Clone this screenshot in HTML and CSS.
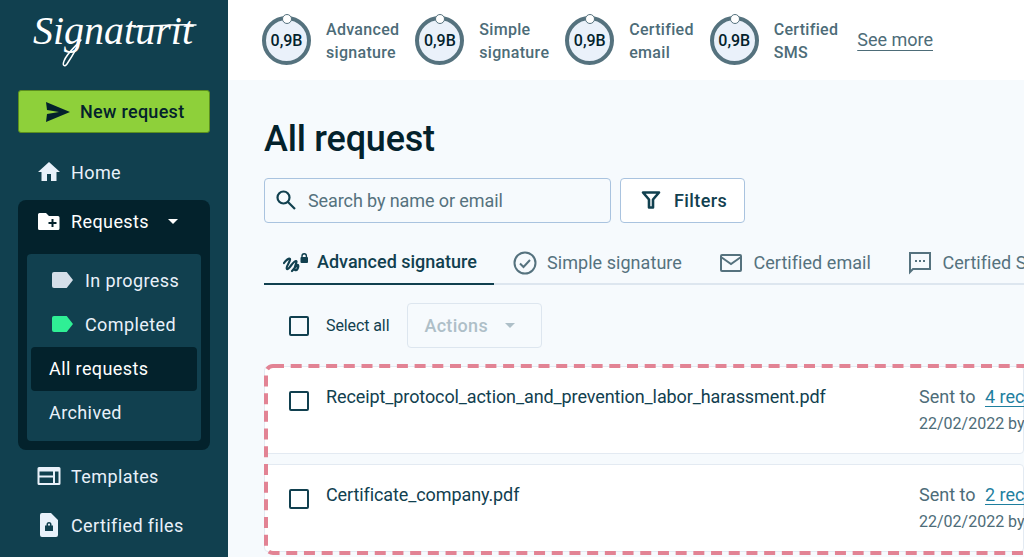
FILE: index.html
```html
<!doctype html>
<html lang="en">
<head>
<meta charset="utf-8">
<title>All request</title>
<link rel="stylesheet" href="styles.css">
</head>

<body>
<div class="app">
  <aside class="side">
    <div class="logo">
      <span class="logo-text">Signaturit</span>
      <svg class="logo-swash" width="192" height="70" viewBox="0 0 192 70" fill="none" stroke="#fff" stroke-width="1.500" stroke-linecap="round"><path d="M116 27c22-1 44-3 62-2"/><path d="M62 40c-3 9-9 18-13 24-2 3-5 2-3-3 3-8 11-14 17-21"/></svg>
    </div>
    <button class="new-btn">
      <svg width="24" height="20" viewBox="0 0 24 20"><path fill="#03222c" d="M0 0l24 10L0 20l1-8 12-2-12-2z"/></svg>
      New request
    </button>
    <a class="nav nav-home">
      <svg class="nav-ico" width="24" height="24" viewBox="0 0 24 24"><path d="M10 21v-7h4v7h5.500v-9H23L12 2 1 12h3.500v9z"/></svg>
      Home
    </a>
    <div class="group">
      <a class="nav nav-open">
        <svg class="nav-ico" width="24" height="24" viewBox="0 0 24 24"><path d="M2.500 3h6.500l3 3h9a1.500 1.500 0 0 1 1.500 1.500v11a1.500 1.500 0 0 1-1.500 1.500h-18.500a1.500 1.500 0 0 1-1.500-1.500v-14a1.500 1.500 0 0 1 1.500-1.500z"/><path fill="#03222c" d="M14.500 9h2v3h3v2h-3v3h-2v-3h-3v-2h3z"/></svg>
        Requests
        <span class="caret"></span>
      </a>
      <div class="sub">
        <a class="sub-item sub-tag"><span class="tag tag-grey"></span>In progress</a>
        <a class="sub-item sub-tag"><span class="tag tag-green"></span>Completed</a>
        <a class="sub-item active">All requests</a>
        <a class="sub-item">Archived</a>
      </div>
    </div>
    <a class="nav nav-tpl">
      <svg class="nav-ico" width="24" height="24" viewBox="0 0 24 24"><path fill-rule="evenodd" d="M2 3h20a1.500 1.500 0 0 1 1.500 1.500v15a1.500 1.500 0 0 1-1.500 1.500h-20a1.500 1.500 0 0 1-1.500-1.500v-15a1.500 1.500 0 0 1 1.500-1.500zM2.500 7.500v4h13.500v-4zM2.500 13.500v5.500h13.500v-5.500zM18 7.500v11.500h3.500v-11.500z"/></svg>
      Templates
    </a>
    <a class="nav nav-files">
      <svg class="nav-ico" width="24" height="24" viewBox="0 0 24 24"><path fill-rule="evenodd" d="M5 0h9l7 7v15a2 2 0 0 1-2 2h-14a2 2 0 0 1-2-2v-20a2 2 0 0 1 2-2zM9.500 11.500v1h-1.500v5.500h8v-5.500h-1.500v-1a2.500 2.500 0 0 0-5 0zM11 11.500a1 1 0 0 1 2 0v1h-2z"/></svg>
      Certified files
    </a>
  </aside>

  <div class="main">
    <header class="top">
      <div class="stat">
        <div class="gauge">0,9B</div>
        <div class="stat-label">Advanced<br>signature</div>
      </div>
      <div class="stat">
        <div class="gauge">0,9B</div>
        <div class="stat-label">Simple<br>signature</div>
      </div>
      <div class="stat">
        <div class="gauge">0,9B</div>
        <div class="stat-label">Certified<br>email</div>
      </div>
      <div class="stat">
        <div class="gauge">0,9B</div>
        <div class="stat-label">Certified<br>SMS</div>
      </div>
      <a class="see-more">See more</a>
    </header>

    <section class="content">
      <h1>All request</h1>
      <div class="tools">
        <div class="search">
          <svg width="22" height="22" viewBox="0 0 22 22" fill="none" stroke="#11404f" stroke-width="2.200"><circle cx="8.500" cy="8.500" r="6"/><path d="M13 13l7 7"/></svg>
          <span>Search by name or email</span>
        </div>
        <button class="filters">
          <svg width="20" height="20" viewBox="0 0 20 20" fill="none" stroke="#11404f" stroke-width="2.600" stroke-linejoin="round"><path d="M2 2.500h16l-6 7v8h-4v-8z"/></svg>
          Filters
        </button>
      </div>

      <nav class="tabs">
        <a class="tab tab-on">
          <svg width="26" height="24" viewBox="0 0 26 24" fill="none" stroke="#11404f" stroke-width="2.200" stroke-linecap="round"><path d="M1 13c2-3 5-5 6-4 1 2-5 8-3 10 2 1 6-8 9-8 2 0-3 8-1 9 2 1 4-3 3-5-1-1-3 3-6 6"/><path d="M19 8v-2a2.200 2.200 0 0 1 4.400 0v2" stroke-width="1.400"/><rect x="17.500" y="7" width="7.500" height="6" fill="#11404f" stroke="none" rx="1"/></svg>
          Advanced signature
        </a>
        <a class="tab">
          <svg width="24" height="24" viewBox="0 0 24 24" fill="none" stroke="#55727e" stroke-width="2"><circle cx="12" cy="12" r="10.500"/><path d="M7 12.500l3.500 3.500 6.500-7"/></svg>
          Simple signature
        </a>
        <a class="tab">
          <svg width="24" height="24" viewBox="0 0 24 24" fill="none" stroke="#55727e" stroke-width="2"><rect x="2" y="4" width="20" height="16" rx="1"/><path d="M2 6l10 7 10-7"/></svg>
          Certified email
        </a>
        <a class="tab">
          <svg width="24" height="24" viewBox="0 0 24 24" fill="none" stroke="#55727e" stroke-width="2"><path d="M2 2h20v16h-17l-3 3z"/><path d="M7 10h2M11 10h2M15 10h2"/></svg>
          Certified SMS
        </a>
      </nav>

      <div class="bulk">
        <span class="check"></span>
        <span class="bulk-label">Select all</span>
        <button class="actions">Actions<span class="caret caret-muted"></span></button>
      </div>

      <div class="list">
        <svg class="dash" width="800" height="191"><rect x="2" y="2" width="796" height="187" rx="7" fill="none" stroke="#e28394" stroke-width="4" stroke-dasharray="11 6.700"/></svg>
        <div class="card">
          <span class="check"></span>
          <div class="card-name">Receipt_protocol_action_and_prevention_labor_harassment.pdf</div>
          <div class="card-meta">
            <div class="sent">Sent to <a>4 recipients</a></div>
            <div class="date">22/02/2022 by John</div>
          </div>
        </div>
        <div class="card">
          <span class="check"></span>
          <div class="card-name">Certificate_company.pdf</div>
          <div class="card-meta">
            <div class="sent">Sent to <a>2 recipients</a></div>
            <div class="date">22/02/2022 by John</div>
          </div>
        </div>
      </div>
    </section>
  </div>
</div>
</body>
</html>
```

FILE: styles.css
```css
* {
  box-sizing: border-box;
}

html,
body {
  margin: 0;
  height: 557px;
  overflow: hidden;
}

body {
  font-family: Roboto, "Liberation Sans", sans-serif;
  color: #11404f;
}

button {
  font-family: inherit;
}

.app {
  display: flex;
  width: 1024px;
  height: 557px;
  overflow: hidden;
}

/* sidebar */
.side {
  flex: 0 0 228px;
  padding-left: 18px;
  padding-right: 18px;
  background: #11404f;
  color: #e9f1fa;
}

.logo {
  position: relative;
  height: 90px;
  padding: 0 0 0 15px;
}

.logo-text {
  display: block;
  padding-top: 8px;
  font-family: "Liberation Serif", serif;
  font-style: italic;
  font-size: 40px;
  line-height: 46px;
  color: #fff;
}

.logo-swash {
  position: absolute;
  top: 0;
  left: 0;
}

.new-btn {
  display: flex;
  align-items: center;
  gap: 10px;
  width: 192px;
  height: 43px;
  padding: 0 0 0 27px;
  border: 1px solid #5c8f1e;
  border-radius: 3px;
  background: #8ed03a;
  color: #03222c;
  font-size: 18px;
  font-weight: 500;
  letter-spacing: 0.3px;
}

.nav {
  display: flex;
  align-items: center;
  gap: 10px;
  height: 28px;
  padding-left: 19px;
  font-size: 18px;
  letter-spacing: 0.4px;
}

.nav-ico {
  fill: #e9f1fa;
  flex: none;
}

.nav-home {
  margin-top: 25px;
}

.group {
  margin-top: 14px;
  padding: 0 9px 9px;
  height: 250px;
  border-radius: 8px;
  background: #03222c;
}

.nav-open {
  height: 43px;
  padding-left: 10px;
  color: #fff;
  margin-bottom: 11px;
}

.nav-open .nav-ico {
  fill: #fff;
}

.caret {
  display: inline-block;
  margin-left: 9px;
  border-left: 5px solid transparent;
  border-right: 5px solid transparent;
  border-top: 5px solid #fff;
}

.sub {
  height: 187px;
  padding: 5px 4px 4px;
  border-radius: 4px;
  background: #11404f;
}

.sub-item {
  display: flex;
  align-items: center;
  height: 44px;
  padding-left: 18px;
  padding-bottom: 2px;
  font-size: 18px;
  letter-spacing: 0.4px;
}

.sub-tag {
  padding-left: 21px;
  gap: 12px;
}

.tag {
  width: 21px;
  height: 16px;
  clip-path: polygon(0 0, 70% 0, 100% 50%, 70% 100%, 0 100%);
  border-radius: 2px;
}

.tag-grey {
  background: #d5dee8;
}

.tag-green {
  background: #2fef95;
}

.active {
  border-radius: 4px;
  background: #03222c;
  color: #fff;
}

.nav-tpl {
  margin-top: 12px;
}

.nav-files {
  margin-top: 21px;
}

/* main column */
.main {
  flex: 1;
  min-width: 0;
  background: #f6fafd;
}

.top {
  display: flex;
  align-items: center;
  gap: 16px;
  height: 80px;
  padding-left: 34px;
  background: #fff;
}

.stat {
  display: flex;
  align-items: center;
  gap: 15px;
}

.gauge {
  position: relative;
  display: flex;
  align-items: center;
  justify-content: center;
  width: 49px;
  height: 49px;
  border: 4px solid #55727e;
  border-radius: 50%;
  background: #eaf1fa;
  color: #03222c;
  font-size: 16px;
  font-weight: 500;
}

.gauge::after {
  content: "";
  position: absolute;
  top: -6px;
  left: 16px;
  width: 8px;
  height: 8px;
  border: 1.500px solid #55727e;
  border-radius: 50%;
  background: #fff;
}

.stat-label {
  padding-top: 1px;
  font-size: 16px;
  font-weight: 500;
  line-height: 23px;
  letter-spacing: 0.3px;
  color: #4d6c78;
}

.see-more {
  margin-left: 3px;
  padding-bottom: 2px;
  font-size: 18px;
  color: #4d6c78;
  text-decoration: underline;
  text-underline-offset: 4px;
}

.content {
  width: 796px;
  padding-left: 36px;
}

h1 {
  margin: 0;
  padding-top: 37px;
  height: 98px;
  font-size: 36px;
  line-height: 44px;
  font-weight: 500;
  letter-spacing: -0.2px;
  color: #03222c;
}

.tools {
  display: flex;
  gap: 9px;
}

.search {
  display: flex;
  align-items: center;
  gap: 11px;
  width: 347px;
  height: 45px;
  padding-left: 10px;
  padding-bottom: 1px;
  border: 1px solid #a9c3df;
  border-radius: 4px;
  background: #f6fafd;
  font-size: 18px;
  letter-spacing: -0.1px;
  color: #55727e;
}

.filters {
  display: flex;
  align-items: center;
  gap: 13px;
  width: 125px;
  height: 45px;
  padding: 0 0 1px 20px;
  border: 1px solid #a9c3df;
  border-radius: 4px;
  background: #fff;
  color: #11404f;
  font-size: 18px;
  font-weight: 500;
  letter-spacing: 0.4px;
}

.filters svg,
.tab svg {
  flex: none;
}

.tabs {
  display: flex;
  width: 760px;
  margin-top: 17px;
  height: 45px;
  border-bottom: 2px solid #dde6ef;
}

.tab {
  display: flex;
  align-items: center;
  gap: 10px;
  flex: none;
  height: 45px;
  padding: 0 18.500px 0 19px;
  font-size: 18px;
  letter-spacing: 0.05px;
  color: #55727e;
  white-space: nowrap;
}

.tab-on {
  width: 230px;
  padding-right: 0;
  gap: 8px;
  border-bottom: 2px solid #11404f;
  color: #11404f;
  font-weight: 500;
  letter-spacing: 0;
}

.bulk {
  display: flex;
  align-items: center;
  height: 45px;
  margin-top: 18px;
  padding-left: 25px;
}

.check {
  display: block;
  flex: none;
  width: 20px;
  height: 20px;
  border: 2px solid #11404f;
  border-radius: 2px;
}

.bulk-label {
  margin-left: 17px;
  padding-bottom: 1px;
  font-size: 16px;
  letter-spacing: -0.1px;
}

.actions {
  display: flex;
  align-items: center;
  gap: 17px;
  width: 135px;
  height: 45px;
  margin-left: 18px;
  padding: 0 0 1px 16px;
  border: 1px solid #dde6ef;
  border-radius: 4px;
  background: #f6fafd;
  color: #aebfc8;
  font-size: 18px;
  font-weight: 500;
  letter-spacing: 0.3px;
}

.caret-muted {
  margin-left: 0;
  border-top-color: #aebfc8;
}

.list {
  position: relative;
  width: 760px;
  margin-top: 16px;
  padding-top: 2px;
}

.dash {
  position: absolute;
  top: 0;
  left: 0;
}

.card {
  display: flex;
  height: 88px;
  margin-bottom: 10px;
  padding: 24px 0 0 24px;
  border: 1px solid #e3eaf2;
  border-radius: 4px;
  background: #fff;
}

.card .check {
  margin-right: 17px;
}

.card-name {
  flex: 0 0 593px;
  margin-top: -5px;
  font-size: 18px;
  letter-spacing: -0.1px;
  color: #11404f;
  white-space: nowrap;
}

.card-meta {
  margin-top: -5px;
  white-space: nowrap;
  color: #4d6c78;
}

.sent {
  font-size: 18px;
}

.sent a {
  margin-left: 5px;
  color: #1f7f9f;
  text-decoration: underline;
  text-underline-offset: 3px;
}

.date {
  margin-top: 7px;
  font-size: 16px;
}
```
